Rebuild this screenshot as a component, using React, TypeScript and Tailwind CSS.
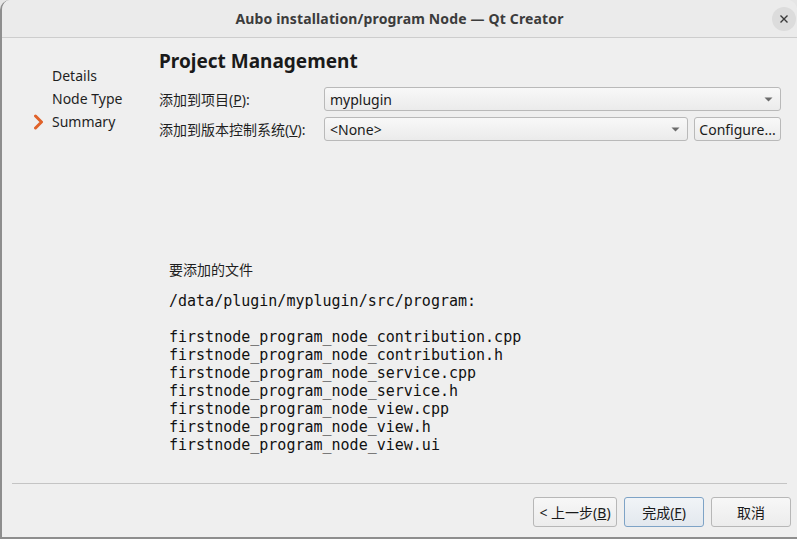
import React from "react";

const ui = { fontFamily: '"Noto Sans", "Noto Sans CJK SC", sans-serif' };
const mono = { fontFamily: '"DejaVu Sans Mono", "Liberation Mono", monospace' };

const files = [
  "firstnode_program_node_contribution.cpp",
  "firstnode_program_node_contribution.h",
  "firstnode_program_node_service.cpp",
  "firstnode_program_node_service.h",
  "firstnode_program_node_view.cpp",
  "firstnode_program_node_view.h",
  "firstnode_program_node_view.ui",
];

function Caret() {
  return (
    <svg width="9" height="5" viewBox="0 0 9 5" className="shrink-0">
      <path d="M0.5 0.5 L8.5 0.5 L4.5 4.5 Z" fill="#6b6b6b" />
    </svg>
  );
}

function Combo({ value, className = "" }: { value: string; className?: string }) {
  return (
    <div
      className={`flex h-[24px] items-center justify-between rounded-[3px] border border-[#b9b9b9] bg-gradient-to-b from-[#f8f8f8] to-[#ebebeb] pl-[5px] pr-[7px] text-[14px] text-[#1a1a1a] ${className}`}
    >
      <span>{value}</span>
      <Caret />
    </div>
  );
}

function Btn({
  children,
  primary = false,
  wide = false,
}: {
  children: React.ReactNode;
  primary?: boolean;
  wide?: boolean;
}) {
  return (
    <button
      className={`flex h-[30px] items-center justify-center rounded-[3px] border text-[14px] text-[#1a1a1a] ${
        wide ? "w-[84px]" : "w-[80px]"
      } ${
        primary
          ? "border-[#7ea3c6] bg-gradient-to-b from-[#f1f4f7] to-[#e3e8ee]"
          : "border-[#b7b7b7] bg-gradient-to-b from-[#f7f7f7] to-[#ececec]"
      }`}
    >
      {children}
    </button>
  );
}

export default function App() {
  return (
    <div className="h-[539px] w-[797px] overflow-hidden bg-[#e6e6e6]" style={ui}>
      <div className="flex h-[539px] w-[797px] flex-col overflow-hidden rounded-t-[10px] border-b-2 border-l-2 border-[#8e8e8e] bg-[#efefef]">
        {/* title bar */}
        <div className="relative flex h-[38px] shrink-0 items-center justify-center border-b border-[#cdcdcd] bg-[#ebebeb]">
          <span className="text-[14px] font-bold tracking-[0.15px] text-[#3c3c3c]">
            Aubo installation/program Node — Qt Creator
          </span>
          <div className="absolute right-[1px] top-[7px] flex h-[24px] w-[24px] items-center justify-center rounded-full bg-[#dcdcdc]">
            <svg width="10" height="10" viewBox="0 0 10 10">
              <path d="M1.5 1.5 L8.5 8.5 M8.5 1.5 L1.5 8.5" stroke="#3a3a3a" strokeWidth="1.4" />
            </svg>
          </div>
        </div>

        {/* body */}
        <div className="flex flex-1">
          {/* sidebar */}
          <div className="w-[157px] shrink-0 pt-[26px] text-[14px] leading-[23px] text-[#1f1f1f]">
            <div className="pl-[50px]">Details</div>
            <div className="pl-[50px]">Node Type</div>
            <div className="flex items-center">
              <svg width="12" height="16" viewBox="0 0 12 16" className="ml-[31px] mr-[7px]">
                <path
                  d="M2.5 2 L8.5 8 L2.5 14"
                  fill="none"
                  stroke="#e0622a"
                  strokeWidth="3"
                  strokeLinecap="round"
                  strokeLinejoin="round"
                />
              </svg>
              <span>Summary</span>
            </div>
          </div>

          {/* main */}
          <div className="flex-1 pr-[16px] pt-[10px] text-[#1f1f1f]">
            <h1 className="text-[19px] font-bold leading-[26px] text-[#1a1a1a]">Project Management</h1>
            <div className="mt-[13px] grid grid-cols-[165px_1fr] items-center gap-y-[6px] text-[14px]">
              <span>
                添加到项目(<span className="underline">P</span>):
              </span>
              <Combo value="myplugin" />
              <span>
                添加到版本控制系统(<span className="underline">V</span>):
              </span>
              <div className="flex gap-[6px]">
                <Combo value="<None>" className="flex-1" />
                <button className="flex h-[24px] w-[87px] items-center justify-center rounded-[3px] border border-[#b9b9b9] bg-gradient-to-b from-[#f8f8f8] to-[#ebebeb] text-[14px] text-[#1a1a1a]">
                  Configure...
                </button>
              </div>
            </div>

            <div className="ml-[10px] mt-[118px] text-[14px] leading-[22px]">要添加的文件</div>
            <div className="ml-[10px] mt-[11px] text-[15px] leading-[18px] text-[#111]" style={mono}>
              <div>/data/plugin/myplugin/src/program:</div>
              <div className="h-[18px]" />
              {files.map((f) => (
                <div key={f}>{f}</div>
              ))}
            </div>
          </div>
        </div>

        {/* footer */}
        <div className="mx-[10px] border-t border-[#c4c4c4]" />
        <div className="flex justify-end gap-[7px] pb-[10px] pr-[6px] pt-[13px]">
          <Btn wide>
            &lt; 上一步(<span className="underline">B</span>)
          </Btn>
          <Btn primary>
            完成(<span className="underline">F</span>)
          </Btn>
          <Btn>取消</Btn>
        </div>
      </div>
    </div>
  );
}
